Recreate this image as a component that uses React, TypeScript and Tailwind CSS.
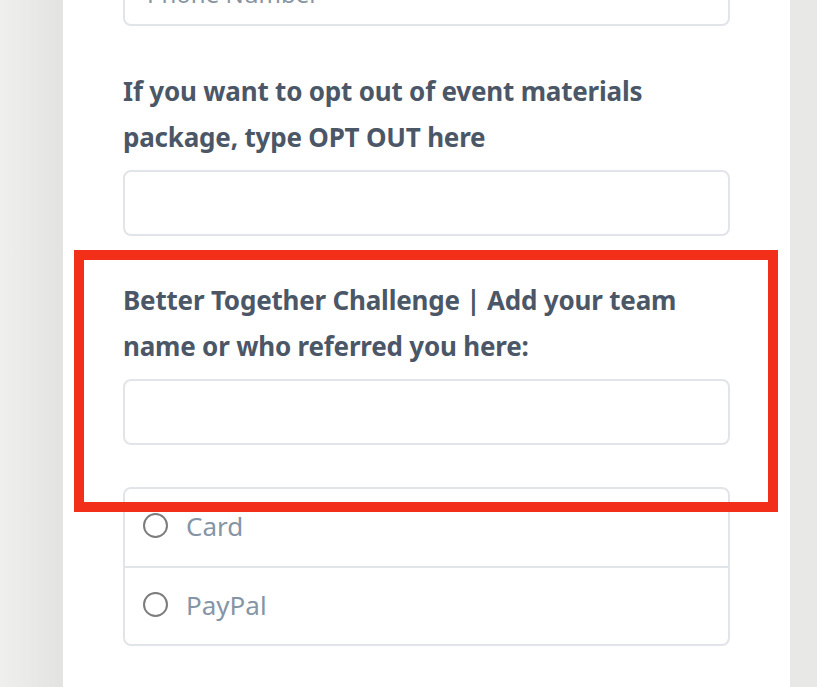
import React from 'react';

const labelCls = "block text-[26px] leading-[46px] font-bold text-[#4b5767] mb-[10px] tracking-[-0.2px]";
const inputCls = "block w-full h-[66px] rounded-[8px] border-2 border-[#e1e5ea] bg-white px-[22px] text-[24px] text-[#6b7a89] placeholder:text-[#8795a3] outline-none";

function Radio({ label, last }: { label: string; last?: boolean }) {
  return (
    <label className={`flex items-start pl-[18px] pt-[23px] ${last ? 'h-[76px]' : 'h-[79px] border-b-2 border-[#e1e5ea]'}`}>
      <span className="w-[25px] h-[25px] rounded-full border-2 border-[#7c7c7c] bg-white shrink-0 mt-[1px]" />
      <span className="ml-[18px] text-[26px] leading-[28px] text-[#8595a5]">{label}</span>
    </label>
  );
}

export default function App() {
  return (
    <div className="relative w-[817px] h-[687px] overflow-hidden flex bg-[#e8e8e6]" style={{ fontFamily: '"Noto Sans", "Open Sans", sans-serif' }}>
      {/* Left gutter */}
      <div className="w-[63px] h-full bg-gradient-to-r from-[#efefed] to-[#e3e3e1]" />

      {/* Form panel */}
      <div className="w-[727px] h-full bg-white px-[60px]">
        <div className="mt-[-40px]">
          <input className={inputCls} placeholder="Phone Number" />
        </div>

        <div className="mt-[42px]">
          <label className={labelCls}>
            If you want to opt out of event materials package, type OPT OUT here
          </label>
          <input className={inputCls} />
        </div>

        <div className="mt-[41px]">
          <label className={labelCls}>
            Better Together Challenge | Add your team name or who referred you here:
          </label>
          <input className={inputCls} />
        </div>

        <div className="mt-[42px] rounded-[8px] border-2 border-[#e1e5ea]">
          <Radio label="Card" />
          <Radio label="PayPal" last />
        </div>
      </div>

      {/* Right gutter */}
      <div className="flex-1 h-full bg-[#e8e8e6]" />

      {/* Highlight overlay */}
      <div className="absolute left-[74px] top-[250px] w-[704px] h-[262px] border-[10px] border-[#f2301a] pointer-events-none" />
    </div>
  );
}
